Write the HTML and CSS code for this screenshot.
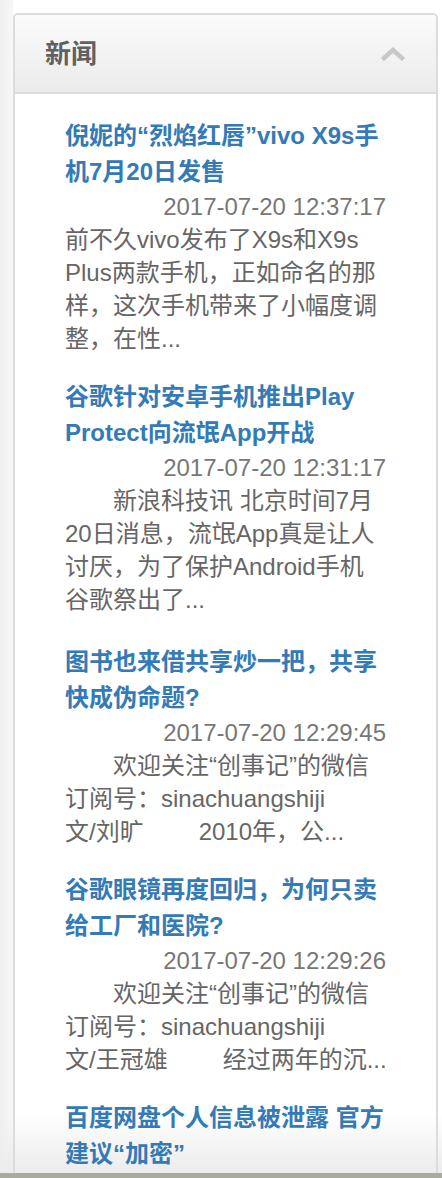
FILE: index.html
```html
<!DOCTYPE html>
<html lang="zh-CN">
<head>
<meta charset="utf-8">
<title>新闻</title>
<link rel="stylesheet" href="styles.css">
</head>
<body>
<div class="fade"></div>
<div class="page">
  <section class="panel">
    <header class="panel-heading">
      <h2 class="panel-title">新闻</h2>
      <svg class="chevron" width="24" height="16" viewBox="0 0 24 16" aria-hidden="true">
        <path d="M3 13 L12 5 L21 13" fill="none" stroke="#c8c8c8" stroke-width="4.5" stroke-linecap="square" stroke-linejoin="miter"/>
      </svg>
    </header>
    <ul class="news-list">
      <li class="news-item">
        <a class="news-title" href="#">倪妮的“烈焰红唇”vivo X9s手机7月20日发售</a>
        <div class="news-date">2017-07-20 12:37:17</div>
        <p class="news-desc">前不久vivo发布了X9s和X9s Plus两款手机，正如命名的那样，这次手机带来了小幅度调整，在性...</p>
      </li>
      <li class="news-item">
        <a class="news-title" href="#">谷歌针对安卓手机推出Play Protect向流氓App开战</a>
        <div class="news-date">2017-07-20 12:31:17</div>
        <p class="news-desc indent">新浪科技讯 北京时间7月20日消息，流氓App真是让人讨厌，为了保护Android手机谷歌祭出了...</p>
      </li>
      <li class="news-item">
        <a class="news-title" href="#">图书也来借共享炒一把，共享快成伪命题?</a>
        <div class="news-date">2017-07-20 12:29:45</div>
        <p class="news-desc indent">欢迎关注“创事记”的微信订阅号：sinachuangshiji<br><span class="nowrap">文/刘旷<span class="gap"></span>2010年，公...</span></p>
      </li>
      <li class="news-item">
        <a class="news-title" href="#">谷歌眼镜再度回归，为何只卖给工厂和医院?</a>
        <div class="news-date">2017-07-20 12:29:26</div>
        <p class="news-desc indent">欢迎关注“创事记”的微信订阅号：sinachuangshiji<br><span class="nowrap">文/王冠雄<span class="gap"></span>经过两年的沉...</span></p>
      </li>
      <li class="news-item">
        <a class="news-title" href="#">百度网盘个人信息被泄露 官方建议“加密”</a>
      </li>
    </ul>
  </section>
</div>
<div class="bottom-bar"></div>
</body>
</html>
```
FILE: styles.css
```css
* { box-sizing: border-box; }
html, body { margin: 0; padding: 0; }
body {
  width: 442px;
  height: 1178px;
  overflow: hidden;
  background: linear-gradient(to right, #f0f0f0 0, #f7f7f7 13px, #fff 13px);
  font-family: "Liberation Sans", "Noto Sans CJK SC", sans-serif;
  position: relative;
}
.page {
  position: relative;
  z-index: 1;
  padding: 13px 4px 0 13px;
}
.panel {
  border: 2px solid #dcdcdc;
  border-radius: 5px;
  min-height: 1200px;
}
.panel-heading {
  height: 79px;
  display: flex;
  align-items: center;
  justify-content: space-between;
  padding: 0 31px 0 30px;
  background: linear-gradient(to bottom, #fbfbfb 0, #ebebeb 100%);
  border-bottom: 2px solid #dcdcdc;
  border-radius: 3px 3px 0 0;
}
.panel-title {
  margin: 0;
  font-size: 26px;
  font-weight: bold;
  color: #606060;
  line-height: 1;
}
.chevron { display: block; margin-top: -2px; }
.news-list {
  list-style: none;
  margin: 0;
  padding: 24px 50px 0 50px;
}
.news-item { margin-bottom: 24px; }
.news-item:nth-child(2) { margin-bottom: 28px; }
.news-title {
  display: block;
  font-size: 24px;
  line-height: 36px;
  font-weight: bold;
  color: #337ab7;
  text-decoration: none;
}
.news-date {
  text-align: right;
  font-size: 24px;
  line-height: 33px;
  color: #777;
}
.news-desc {
  margin: 0;
  font-size: 24px;
  line-height: 33px;
  color: #666;
}
.news-desc.indent { text-indent: 48px; }
.gap { display: inline-block; width: 55px; }
.nowrap { white-space: nowrap; }
.fade {
  position: absolute;
  left: 0; right: 0;
  bottom: 5px;
  height: 60px;
  z-index: 0;
  background: linear-gradient(to bottom, rgba(236,236,236,0) 0, #ececec 100%);
}
.bottom-bar {
  position: absolute;
  left: 0; right: 0; bottom: 0;
  height: 5px;
  z-index: 2;
  background: #a9ab9e;
}
```
